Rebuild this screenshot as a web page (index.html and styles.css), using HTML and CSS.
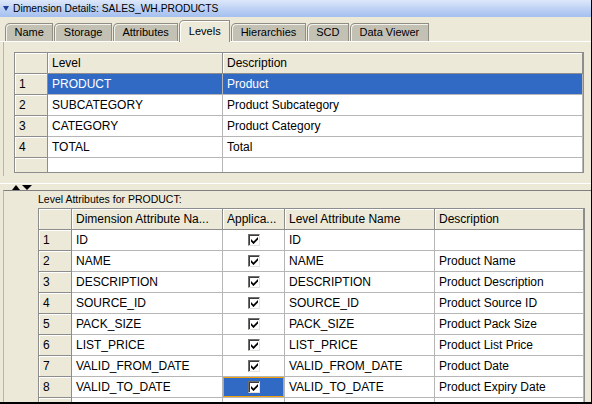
FILE: index.html
```html
<!DOCTYPE html>
<html>
<head>
<meta charset="utf-8">
<title>Dimension Details</title>
<link rel="stylesheet" href="styles.css">
</head>
<body>
<div class="window">
  <div class="titlebar"><span class="tri"></span><span class="title">Dimension Details: SALES_WH.PRODUCTS</span></div>
  <div class="tabs">
    <div class="tab">Name</div>
    <div class="tab">Storage</div>
    <div class="tab">Attributes</div>
    <div class="tab active">Levels</div>
    <div class="tab">Hierarchies</div>
    <div class="tab">SCD</div>
    <div class="tab">Data Viewer</div>
  </div>
  <div class="upper">
    <div class="tbl levels">
      <div class="row hrow"><div class="cell hd"></div><div class="cell hd">Level</div><div class="cell hd">Description</div></div>
      <div class="row sel"><div class="cell rh">1</div><div class="cell">PRODUCT</div><div class="cell">Product</div></div>
      <div class="row"><div class="cell rh">2</div><div class="cell">SUBCATEGORY</div><div class="cell">Product Subcategory</div></div>
      <div class="row"><div class="cell rh">3</div><div class="cell">CATEGORY</div><div class="cell">Product Category</div></div>
      <div class="row"><div class="cell rh">4</div><div class="cell">TOTAL</div><div class="cell">Total</div></div>
      <div class="row"><div class="cell rh"></div><div class="cell"></div><div class="cell"></div></div>
    </div>
  </div>
  <div class="divider">
    <div class="divider-bar"><span class="arrow-up"></span><span class="arrow-down"></span></div>
  </div>
  <div class="lower">
    <div class="caption">Level Attributes for PRODUCT:</div>
    <div class="tbl attrs">
      <div class="row hrow"><div class="cell hd"></div><div class="cell hd">Dimension Attribute Na...</div><div class="cell hd">Applica...</div><div class="cell hd">Level Attribute Name</div><div class="cell hd">Description</div></div>
      <div class="row"><div class="cell rh">1</div><div class="cell">ID</div><div class="cell chk"><span class="cb"><svg viewBox="0 0 7 7" width="7" height="7"><polygon points="0,2 2.5,4.5 7,0 7,2.6 2.5,7.1 0,4.6"/></svg></span></div><div class="cell">ID</div><div class="cell"></div></div>
      <div class="row"><div class="cell rh">2</div><div class="cell">NAME</div><div class="cell chk"><span class="cb"><svg viewBox="0 0 7 7" width="7" height="7"><polygon points="0,2 2.5,4.5 7,0 7,2.6 2.5,7.1 0,4.6"/></svg></span></div><div class="cell">NAME</div><div class="cell">Product Name</div></div>
      <div class="row"><div class="cell rh">3</div><div class="cell">DESCRIPTION</div><div class="cell chk"><span class="cb"><svg viewBox="0 0 7 7" width="7" height="7"><polygon points="0,2 2.5,4.5 7,0 7,2.6 2.5,7.1 0,4.6"/></svg></span></div><div class="cell">DESCRIPTION</div><div class="cell">Product Description</div></div>
      <div class="row"><div class="cell rh">4</div><div class="cell">SOURCE_ID</div><div class="cell chk"><span class="cb"><svg viewBox="0 0 7 7" width="7" height="7"><polygon points="0,2 2.5,4.5 7,0 7,2.6 2.5,7.1 0,4.6"/></svg></span></div><div class="cell">SOURCE_ID</div><div class="cell">Product Source ID</div></div>
      <div class="row"><div class="cell rh">5</div><div class="cell">PACK_SIZE</div><div class="cell chk"><span class="cb"><svg viewBox="0 0 7 7" width="7" height="7"><polygon points="0,2 2.5,4.5 7,0 7,2.6 2.5,7.1 0,4.6"/></svg></span></div><div class="cell">PACK_SIZE</div><div class="cell">Product Pack Size</div></div>
      <div class="row"><div class="cell rh">6</div><div class="cell">LIST_PRICE</div><div class="cell chk"><span class="cb"><svg viewBox="0 0 7 7" width="7" height="7"><polygon points="0,2 2.5,4.5 7,0 7,2.6 2.5,7.1 0,4.6"/></svg></span></div><div class="cell">LIST_PRICE</div><div class="cell">Product List Price</div></div>
      <div class="row"><div class="cell rh">7</div><div class="cell">VALID_FROM_DATE</div><div class="cell chk"><span class="cb"><svg viewBox="0 0 7 7" width="7" height="7"><polygon points="0,2 2.5,4.5 7,0 7,2.6 2.5,7.1 0,4.6"/></svg></span></div><div class="cell">VALID_FROM_DATE</div><div class="cell">Product Date</div></div>
      <div class="row"><div class="cell rh">8</div><div class="cell">VALID_TO_DATE</div><div class="cell chk focus"><span class="cb"><svg viewBox="0 0 7 7" width="7" height="7"><polygon points="0,2 2.5,4.5 7,0 7,2.6 2.5,7.1 0,4.6"/></svg></span></div><div class="cell">VALID_TO_DATE</div><div class="cell">Product Expiry Date</div></div>
      <div class="row"><div class="cell rh"></div><div class="cell"></div><div class="cell"></div><div class="cell"></div><div class="cell"></div></div>
    </div>
  </div>
</div>
</body>
</html>
```

FILE: styles.css
```css
* { box-sizing: border-box; }
html, body { margin: 0; padding: 0; }
body {
  width: 592px;
  height: 404px;
  overflow: hidden;
  background: #ece9d8;
  font-family: "Liberation Sans", Arial, sans-serif;
  font-size: 12px;
  color: #000;
}
.window {
  width: 592px;
  height: 404px;
  display: flex;
  flex-direction: column;
  background: #ece9d8;
  border-right: 1px solid #000;
  border-bottom: 2px solid #000;
  overflow: hidden;
}
.titlebar {
  flex: none;
  height: 17px;
  display: flex;
  align-items: center;
  gap: 4px;
  padding-left: 3px;
  background: linear-gradient(to bottom, #dde7fa 0%, #bcd0f4 55%, #a5bfef 100%);
}
.tri {
  width: 0;
  height: 0;
  border-left: 3.5px solid transparent;
  border-right: 3.5px solid transparent;
  border-top: 5px solid #1d3d98;
}
.title { font-size: 10.3px; line-height: 17px; }
.tabs {
  flex: none;
  height: 25px;
  display: flex;
  align-items: flex-end;
  gap: 1px;
  padding-left: 5px;
  border-bottom: 1px solid #fff;
}
.tab {
  height: 18px;
  padding: 0 8.5px;
  font-size: 11px;
  line-height: 17px;
  background: #c3c0b4;
  border: 1px solid #8f8d84;
  border-bottom: none;
  border-top-left-radius: 5px;
  box-shadow: inset 1px 1px 0 #f2f1ea;
  white-space: nowrap;
}
.tab.active {
  height: 22px;
  margin-bottom: -1px;
  line-height: 20px;
  background: #ece9d8;
  padding-bottom: 1px;
  box-shadow: inset 1px 1px 0 #fff;
}
.upper {
  flex: none;
  height: 134px;
  margin-left: 3px;
  border-left: 1px solid #b8b6aa;
  padding: 10px 0 0 10px;
}
.tbl {
  border: 1px solid #8d8d8d;
  background: #fff;
  overflow: hidden;
}
.levels { width: 570px; height: 121px; }
.row { display: grid; height: 21px; }
.levels .row { grid-template-columns: 33px 175px 1fr; }
.attrs .row { grid-template-columns: 33px 151px 62px 150px 1fr; }
.cell {
  border-right: 1px solid #b6b6b6;
  border-bottom: 1px solid #b6b6b6;
  padding-left: 4px;
  line-height: 20px;
  white-space: nowrap;
  overflow: hidden;
  background: #fff;
}
.hd, .rh {
  background: #ece9d8;
  border-right-color: #8d8d8d;
  border-bottom-color: #8d8d8d;
  box-shadow: inset 1px 1px 0 #fff;
}
.sel .cell:not(.rh) { background: #316ac5; color: #fff; }
.divider { flex: none; height: 14px; padding-top: 7px; }
.divider-bar {
  height: 7px;
  border-top: 1px solid #fff;
  display: flex;
  align-items: center;
  gap: 2px;
  padding-left: 12px;
}
.arrow-up {
  width: 0; height: 0;
  border-left: 4.5px solid transparent;
  border-right: 4.5px solid transparent;
  border-bottom: 5px solid #000;
}
.arrow-down {
  width: 0; height: 0;
  border-left: 5px solid transparent;
  border-right: 5px solid transparent;
  border-top: 5px solid #000;
}
.lower {
  flex: 1;
  min-height: 0;
  margin-left: 3px;
  border-left: 1px solid #b8b6aa;
  border-top: 1px solid #7f7f7f;
  display: flex;
  flex-direction: column;
  padding-left: 34px;
  overflow: hidden;
}
.caption { flex: none; height: 17px; line-height: 17px; font-size: 10.5px; }
.attrs { width: 547px; flex: 1; border-bottom: none; }
.chk { display: flex; align-items: center; justify-content: center; padding-left: 0; }
.cb {
  width: 12px;
  height: 12px;
  display: flex;
  align-items: center;
  justify-content: center;
  background: #fff;
  border: 1px solid;
  border-color: #6f6f6f #e4e2da #e4e2da #6f6f6f;
  box-shadow: inset 1px 1px 0 #3c3c3c;
}
.cb svg { display: block; fill: #000; margin: 1px 0 0 1px; }
.focus { background: #316ac5; box-shadow: inset 0 0 0 1px #f2a20c; }
```
